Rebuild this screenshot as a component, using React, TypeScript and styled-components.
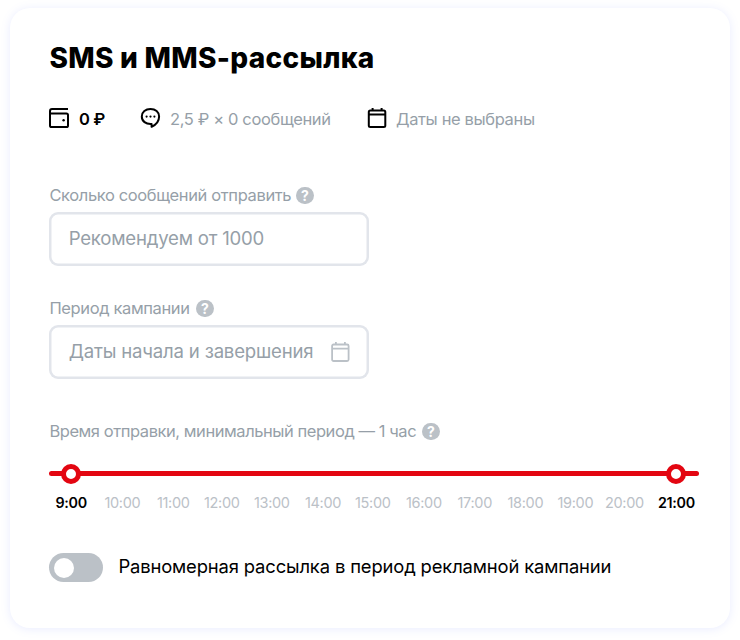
import React from "react";
import styled, { createGlobalStyle } from "styled-components";

const GlobalStyle = createGlobalStyle`
  * { box-sizing: border-box; }
  body { margin: 0; background: #fff; font-family: Inter, "Liberation Sans", sans-serif; }
`;

const Page = styled.main`
  width: 740px;
  height: 640px;
  padding: 8px 10px 12px;
  overflow: hidden;
`;

const Card = styled.section`
  display: flex;
  flex-direction: column;
  height: 620px;
  padding: 32px 31px 0 39.4px;
  border-radius: 20px;
  background: #fff;
  box-shadow: 0 1px 10px rgba(110, 125, 255, 0.15);
`;

const Title = styled.h1`
  margin: 0;
  height: 36px;
  font-size: 28px;
  line-height: 36px;
  font-weight: 800;
  letter-spacing: 0.3px;
  color: #000;
  white-space: nowrap;
`;

const Summary = styled.div`
  display: grid;
  grid-template-columns: 91px 227px auto;
  height: 24px;
  margin-top: 30px;
`;

const SummaryItem = styled.div<{ $strong?: boolean }>`
  display: flex;
  align-items: center;
  gap: 9px;
  font-size: 16.5px;
  line-height: 24px;
  font-weight: ${(p) => (p.$strong ? 600 : 400)};
  letter-spacing: -0.37px;
  color: ${(p) => (p.$strong ? "#000" : "#969fa8")};
  white-space: nowrap;
  svg { flex: none; color: #000; }
  span { position: relative; top: 1px; left: -0.4px; }
`;

const Field = styled.div<{ $top: number }>`
  width: 320px;
  margin-top: ${(p) => p.$top}px;
`;

const Label = styled.div<{ $gap: number; $track?: number }>`
  display: flex;
  align-items: center;
  gap: ${(p) => p.$gap}px;
  height: 24px;
  font-size: 16.5px;
  line-height: 23px;
  letter-spacing: ${(p) => p.$track ?? -0.37}px;
  color: #969fa8;
  white-space: nowrap;
`;

const Input = styled.div<{ $track: number }>`
  display: flex;
  align-items: center;
  justify-content: space-between;
  width: 320px;
  height: 54px;
  margin-top: 5px;
  padding: 0 18.4px 3px 19.3px;
  box-shadow: inset 0 0 0 2.5px #e2e5eb;
  border-radius: 9px;
  font-size: 18.6px;
  letter-spacing: ${(p) => p.$track}px;
  color: #969fa8;
  white-space: nowrap;
  svg { position: relative; top: 1.5px; color: #bbc1c7; }
`;

const TimeBlock = styled.div`
  margin-top: 40px;
`;

const Slider = styled.div`
  position: relative;
  width: 649.5px;
  height: 5px;
  margin-top: 28px;
  border-radius: 3px;
  background: #e30611;
`;

const Thumb = styled.span<{ $x: number }>`
  position: absolute;
  top: -7.5px;
  left: ${(p) => p.$x}px;
  width: 20px;
  height: 20px;
  border: 5px solid #e30611;
  border-radius: 50%;
  background: #fff;
`;

const Hours = styled.div`
  display: grid;
  grid-template-columns: 49px 52.5px 47px 50px 51px 50px 51px 51.5px 50px 50px 47.5px 53px 40px;
  margin: 17px 0 0 6px;
  line-height: 20px;
`;

const Hour = styled.span<{ $active: boolean }>`
  font-size: ${(p) => (p.$active ? 14.3 : 14.5)}px;
  font-weight: ${(p) => (p.$active ? 600 : 400)};
  letter-spacing: -0.3px;
  color: ${(p) => (p.$active ? "#000" : "#bbc1c7")};
`;

const ToggleRow = styled.div`
  display: flex;
  align-items: center;
  height: 30px;
  margin-top: 39.4px;
  gap: 15px;
  font-size: 18.4px;
  letter-spacing: -0.14px;
  color: #000;
  white-space: nowrap;
  span { position: relative; top: -1px; }
`;

const Switch = styled.div`
  width: 54px;
  height: 29.5px;
  padding: 5px;
  border-radius: 15px;
  background: #bbc1c7;
  &::before {
    content: "";
    display: block;
    width: 20px;
    height: 20px;
    border-radius: 50%;
    background: #fff;
  }
`;

const WalletIcon = () => (
  <svg width="21" height="22" viewBox="0.2 0 21 22" fill="none" stroke="currentColor" strokeWidth="2">
    <path d="M19.2 2H3.2Q1.2 2 1.2 4.2V18.4Q1.2 20 2.8 20H17.6Q19.2 20 19.2 18.4V8Q19.2 6.4 17.6 6.4H1.2" />
    <circle cx="14.8" cy="13.2" r="1.2" fill="currentColor" stroke="none" />
  </svg>
);

const ChatIcon = () => (
  <svg width="21" height="22" viewBox="0 0 21 22">
    <path d="M10.5 2C15.4 2 19.1 5 19.1 9.5C19.1 14.6 15.5 18 11.6 19.8V17C5.8 17.4 1.8 14.2 1.8 9.5C1.8 5 5.6 2 10.5 2Z" fill="none" stroke="currentColor" strokeWidth="2" strokeLinejoin="round" />
    <circle cx="6.6" cy="9.6" r="1.1" fill="currentColor" />
    <circle cx="10.5" cy="9.6" r="1.1" fill="currentColor" />
    <circle cx="14.4" cy="9.6" r="1.1" fill="currentColor" />
  </svg>
);

const CalendarIcon = ({ thin = false }: { thin?: boolean }) => (
  <svg width="20" height="22" viewBox={thin ? "0.4 0 20 22" : "-0.3 0 20 22"} fill="none" stroke="currentColor" strokeWidth={thin ? 1.8 : 2}>
    <rect x="1.5" y="3.5" width="16.5" height="16.5" rx="1.5" />
    <path d="M1.5 7.6H18M5.3 1V4M14.3 1V4" />
  </svg>
);

const Badge = styled.span`
  display: flex;
  align-items: center;
  justify-content: center;
  width: 17.5px;
  height: 17.5px;
  margin-top: 1px;
  border-radius: 50%;
  background: #bbc1c7;
  color: #fff;
  font-size: 14px;
  line-height: 17px;
  font-weight: 700;
  letter-spacing: 0;
`;

const Help = () => <Badge>?</Badge>;

const hours = Array.from({ length: 13 }, (_, i) => `${i + 9}:00`);

export default function App() {
  return (
    <Page>
      <GlobalStyle />
      <Card>
        <Title>SMS и MMS-рассылка</Title>
        <Summary>
          <SummaryItem $strong><WalletIcon /><span>0 ₽</span></SummaryItem>
          <SummaryItem><ChatIcon /><span>2,5 ₽ × 0 сообщений</span></SummaryItem>
          <SummaryItem><CalendarIcon /><span>Даты не выбраны</span></SummaryItem>
        </Summary>
        <Field $top={53}>
          <Label $gap={5}>Сколько сообщений отправить<Help /></Label>
          <Input $track={-0.22}>Рекомендуем от 1000</Input>
        </Field>
        <Field $top={30}>
          <Label $gap={6.5}>Период кампании<Help /></Label>
          <Input $track={-0.2}>Даты начала и завершения<CalendarIcon thin /></Input>
        </Field>
        <TimeBlock>
          <Label $gap={6} $track={-0.44}>Время отправки, минимальный период — 1 час<Help /></Label>
          <Slider><Thumb $x={12.1} /><Thumb $x={617.1} /></Slider>
          <Hours>
            {hours.map((h, i) => (
              <Hour key={h} $active={i === 0 || i === hours.length - 1}>{h}</Hour>
            ))}
          </Hours>
        </TimeBlock>
        <ToggleRow>
          <Switch />
          <span>Равномерная рассылка в период рекламной кампании</span>
        </ToggleRow>
      </Card>
    </Page>
  );
}
